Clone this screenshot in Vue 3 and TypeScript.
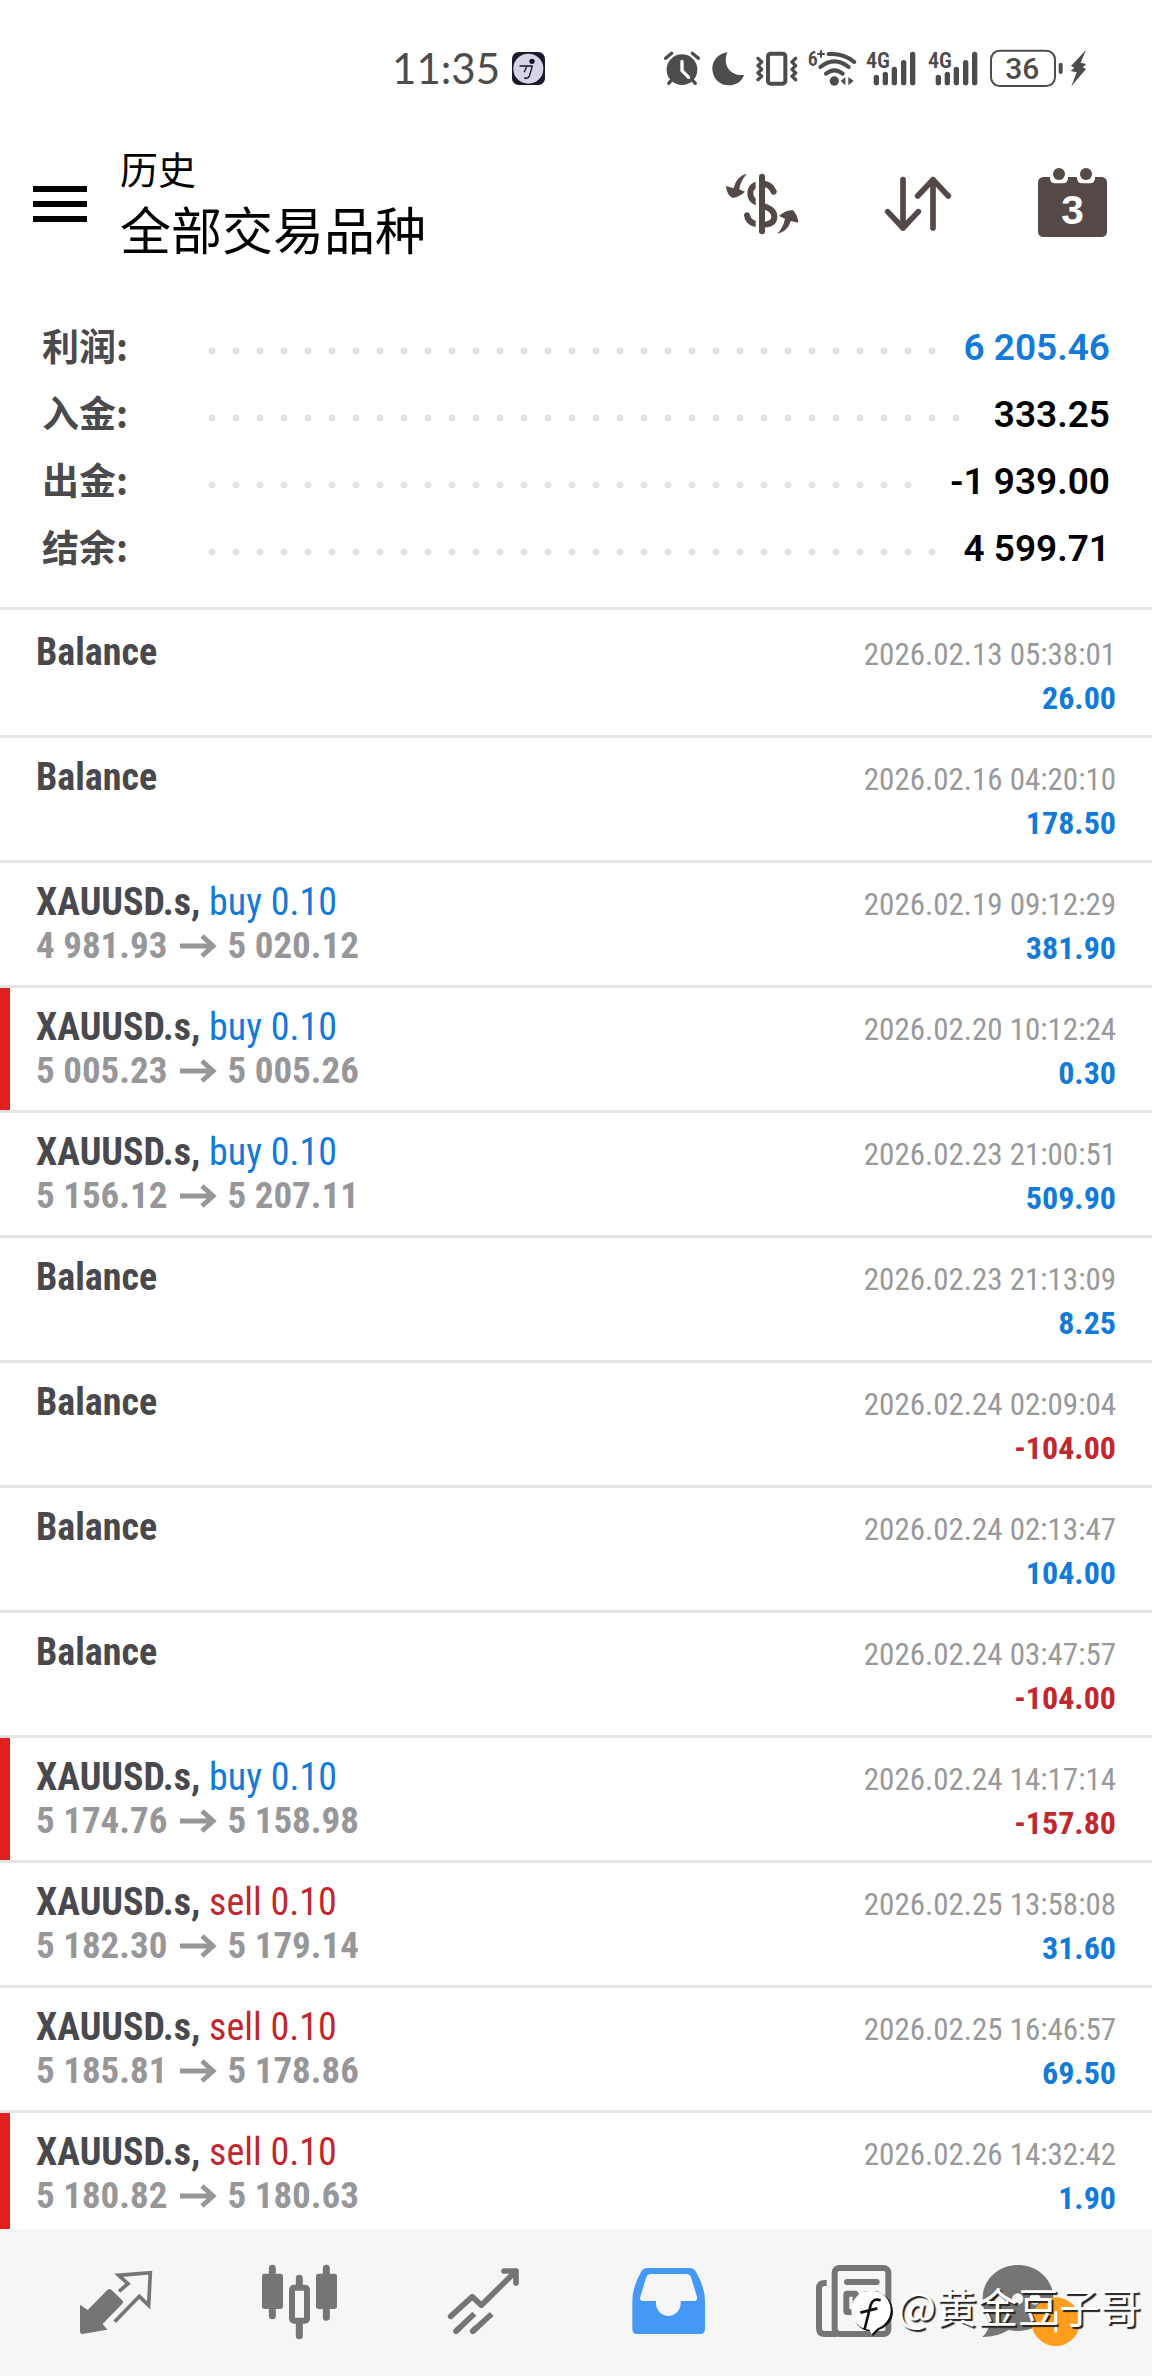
<script setup lang="ts">
interface SummaryLine {
  label: string
  value: string
  positive?: boolean
}

interface HistoryEntry {
  time: string
  amount: string
  side?: 'buy' | 'sell'
  open?: string
  close?: string
  flagged?: boolean
}

const summary: SummaryLine[] = [
  { label: '利润:', value: '6 205.46', positive: true },
  { label: '入金:', value: '333.25' },
  { label: '出金:', value: '-1 939.00' },
  { label: '结余:', value: '4 599.71' },
]

const entries: HistoryEntry[] = [
  { time: '2026.02.13 05:38:01', amount: '26.00' },
  { time: '2026.02.16 04:20:10', amount: '178.50' },
  { time: '2026.02.19 09:12:29', amount: '381.90', side: 'buy', open: '4 981.93', close: '5 020.12' },
  { time: '2026.02.20 10:12:24', amount: '0.30', side: 'buy', open: '5 005.23', close: '5 005.26', flagged: true },
  { time: '2026.02.23 21:00:51', amount: '509.90', side: 'buy', open: '5 156.12', close: '5 207.11' },
  { time: '2026.02.23 21:13:09', amount: '8.25' },
  { time: '2026.02.24 02:09:04', amount: '-104.00' },
  { time: '2026.02.24 02:13:47', amount: '104.00' },
  { time: '2026.02.24 03:47:57', amount: '-104.00' },
  { time: '2026.02.24 14:17:14', amount: '-157.80', side: 'buy', open: '5 174.76', close: '5 158.98', flagged: true },
  { time: '2026.02.25 13:58:08', amount: '31.60', side: 'sell', open: '5 182.30', close: '5 179.14' },
  { time: '2026.02.25 16:46:57', amount: '69.50', side: 'sell', open: '5 185.81', close: '5 178.86' },
  { time: '2026.02.26 14:32:42', amount: '1.90', side: 'sell', open: '5 180.82', close: '5 180.63', flagged: true },
]
</script>

<template>
  <div class="app">
    <div class="status">
      <div class="status-left">
        <span class="clock">11:35</span>
        <svg width="33" height="33" viewBox="397 65 99 99" aria-hidden="true">
          <rect x="397" y="65" width="99" height="99" rx="20" fill="#1d1b2b" />
          <circle cx="446" cy="115" r="45" fill="#d9d3ea" />
          <circle cx="457" cy="93" r="8" fill="#17151f" />
          <path d="M421 107H458L449 138Q446 146 435 143M441 109L434 124" fill="none" stroke="#17151f" stroke-width="4" stroke-linecap="round" stroke-linejoin="round" />
        </svg>
      </div>
      <div class="status-right">
        <svg width="37" height="39" viewBox="72 54 111 117" aria-hidden="true">
          <circle cx="126" cy="116" r="46" fill="#4c4c4c" />
          <path d="M77 82L95 67M157 67L175 82M94 148L86 157M158 148L166 157" class="ink" stroke-width="10" />
          <path d="M126 91V119L146 139" fill="none" stroke="#fff" stroke-width="10" stroke-linecap="round" stroke-linejoin="round" />
        </svg>
        <svg width="34" height="39" viewBox="213 54 102 117" aria-hidden="true">
          <path d="M262 63C228 70 216 95 217 115C219 145 240 163 265 163C290 163 306 150 312 132C272 136 246 104 262 63Z" fill="#4c4c4c" />
        </svg>
        <svg width="43" height="39" viewBox="345 54 129 117" aria-hidden="true">
          <rect x="384" y="68" width="52" height="90" rx="8" class="ink" stroke-width="12" />
          <path d="M354 82L365 93L354 104L365 115L354 126L365 136L354 146M467 82L456 93L467 104L456 115L467 126L456 136L467 146" class="ink" stroke-width="10" />
        </svg>
        <svg width="48" height="39" viewBox="504 54 144 117" aria-hidden="true">
          <text x="503" y="104" class="tag" font-size="60">6</text>
          <path d="M534 69H552M543 60V78" class="ink" stroke-width="6" />
          <path d="M566 69Q612 66 643 93M541 108Q583 74 626 108M558 128Q583 108 608 128" class="ink" stroke-width="12" />
          <circle cx="583" cy="150" r="14" fill="#4c4c4c" />
          <path d="M616 138V163L602 150ZM625 138L641 150L625 163Z" fill="#4c4c4c" />
        </svg>
        <svg v-for="n in 2" :key="n" width="52" height="39" viewBox="678 54 156 117" aria-hidden="true">
          <text x="678" y="110" class="tag" font-size="66">4G</text>
          <path d="M709 139V155M736 130V155M763 115V155M791 95V155M818 70V155" class="ink" stroke-width="16" />
        </svg>
        <svg width="70" height="39" viewBox="1050 54 210 117" aria-hidden="true">
          <rect x="1053" y="59" width="192" height="106" rx="26" class="ink" stroke-width="6" />
          <path d="M1262 101V123" class="ink" stroke-width="12" />
          <text x="1147" y="145" class="charge" font-size="90" text-anchor="middle">36</text>
        </svg>
        <svg width="17" height="39" viewBox="1290 54 51 117" aria-hidden="true">
          <path d="M1338 57L1293 105L1303 110L1292 120L1310 124L1294 166L1338 114L1328 109L1339 99L1322 95Z" fill="#4c4c4c" />
        </svg>
      </div>
    </div>

    <header class="header">
      <button class="menu" type="button" aria-label="菜单">
        <span></span><span></span><span></span>
      </button>
      <h1 class="title">
        <span class="section">历史</span>
        <span class="filter">全部交易品种</span>
      </h1>
      <div class="actions">
        <button type="button" aria-label="货币">
          <svg width="74" height="70" viewBox="135 87 222 210">
            <g fill="none" stroke="#544946" stroke-width="18" stroke-linecap="round">
              <path d="M281 155Q272 131 246 131C222 131 211 144 211 160C211 180 224 186 246 196C272 206 283 214 283 230C283 246 270 254 246 254C218 254 204 244 201 226" />
              <path d="M232 94V290" stroke="#fff" stroke-width="10" stroke-linecap="butt" />
              <path d="M246 110V274" />
            </g>
            <path d="M201 101C180 105 166 122 161 145L138 138Q140 165 158 174Q180 170 195 155L178 148C180 130 190 112 201 101ZM292 281C313 277 327 262 332 243L355 248Q352 222 338 210Q316 210 297 228L315 236C312 252 304 269 292 281Z" fill="#544946" />
          </svg>
        </button>
        <button type="button" aria-label="排序">
          <svg width="67" height="70" viewBox="615 87 201 210">
            <path d="M669 119V264M623 215L669 264L715 215M759 264V119M713 168L759 119L805 168" fill="none" stroke="#544946" stroke-width="17" stroke-linecap="round" stroke-linejoin="round" />
          </svg>
        </button>
        <button type="button" aria-label="日期">
          <svg width="69" height="70" viewBox="1074 87 207 210">
            <rect x="1074" y="111" width="207" height="180" rx="16" fill="#544946" />
            <path d="M1110 108H1164V114Q1164 130 1148 130H1126Q1110 130 1110 114ZM1191 108H1245V114Q1245 130 1229 130H1207Q1191 130 1191 114Z" fill="#fff" />
            <circle cx="1137" cy="102" r="18" fill="#544946" />
            <circle cx="1218" cy="102" r="18" fill="#544946" />
            <text x="1178" y="253" class="day" font-size="122" text-anchor="middle">3</text>
          </svg>
        </button>
      </div>
    </header>

    <dl class="summary">
      <div v-for="line in summary" :key="line.label" class="sum-line">
        <dt>{{ line.label }}</dt>
        <dd :class="{ blue: line.positive }">{{ line.value }}</dd>
      </div>
    </dl>

    <ul class="list">
      <li v-for="entry in entries" :key="entry.time" class="entry" :class="{ flagged: entry.flagged }">
        <div class="deal">
          <template v-if="entry.side">
            <div class="line">
              <b>XAUUSD.s, </b><span :class="entry.side === 'buy' ? 'blue' : 'red'">{{ entry.side }} 0.10</span>
            </div>
            <div class="line prices">
              {{ entry.open }}<svg class="arrow" width="36" height="24" viewBox="0 0 36 24" aria-label="→">
                <path d="M0 12H33M22 2L33 12L22 22" fill="none" stroke="currentColor" stroke-width="5" />
              </svg>{{ entry.close }}
            </div>
          </template>
          <div v-else class="line"><b>Balance</b></div>
        </div>
        <div class="result">
          <div class="line"><time>{{ entry.time }}</time></div>
          <div class="line">
            <span class="amount" :class="entry.amount.startsWith('-') ? 'red' : 'blue'">{{ entry.amount }}</span>
          </div>
        </div>
      </li>
    </ul>

    <nav class="tabs">
      <button type="button" aria-label="行情">
        <svg width="80" height="80" viewBox="228 486 240 240">
          <path d="M240 614L263 630L322 570Q328 564 335 570L366 600Q372 606 366 612L308 672L322 689L247 702Q240 702 240 695Z" fill="#757575" />
          <path d="M357 574L384 551L356 526L451 518L446 616L418 589L344 665" fill="none" stroke="#757575" stroke-width="11" />
        </svg>
      </button>
      <button type="button" aria-label="图表">
        <svg width="80" height="80" viewBox="780 486 240 240" fill="#757575">
          <rect x="786" y="521" width="63" height="106" rx="8" />
          <rect x="948" y="521" width="63" height="106" rx="8" />
          <path d="M817 505V647M979 505V652M898 535V560M898 665V707" stroke="#757575" stroke-width="21" stroke-linecap="round" />
          <rect x="876" y="563" width="45" height="99" rx="6" fill="#f6f6f6" stroke="#757575" stroke-width="18" />
        </svg>
      </button>
      <button type="button" aria-label="交易">
        <svg width="80" height="80" viewBox="132 186 240 240">
          <g fill="none" stroke="#757575" stroke-width="17" stroke-linejoin="round">
            <path d="M152 349L217 290L244 316L348 213M312 213H348V249M168 394L178 384M218 394L228 384" stroke-linecap="round" />
            <path d="M168 394L223 341M218 394L275 342" />
          </g>
        </svg>
      </button>
      <button type="button" aria-label="历史" aria-current="page">
        <svg width="80" height="80" viewBox="684 186 240 240">
          <path fill="#4499f7" fill-rule="evenodd" d="M742 204H868Q880 204 887 214Q915 262 915 303V388Q915 402 901 402H711Q697 402 697 388V303Q697 262 724 214Q731 204 742 204ZM752 222Q743 222 739 232L721 290Q718 303 729 303H768V310A37 38 0 0 0 842 310V303H882Q893 303 891 290L873 232Q869 222 858 222Z" />
        </svg>
      </button>
      <button type="button" aria-label="新闻">
        <svg width="80" height="80" viewBox="96 186 240 240">
          <g fill="none" stroke="#757575" stroke-width="18">
            <rect x="164" y="204" width="161" height="198" rx="14" />
            <path d="M140 249H134Q117 249 117 266V385Q117 402 134 402H170" />
            <path d="M201 246H290M260 282H290M260 310H290" stroke-linecap="round" />
            <rect x="199" y="281" width="28" height="55" rx="2" />
          </g>
        </svg>
      </button>
      <button type="button" aria-label="消息">
        <svg width="80" height="80" viewBox="648 186 240 240">
          <path d="M714 195C774 195 820 240 820 294C820 350 774 393 714 393Q700 393 686 390Q655 410 607 411Q627 392 628 368Q608 335 608 294C608 240 654 195 714 195Z" fill="#757575" />
          <path d="M661 297H661M713 297H713M765 297H765" stroke="#f6f6f6" stroke-width="34" stroke-linecap="round" />
          <circle cx="827" cy="365" r="73" fill="#ff9d1c" />
          <path d="M827 337V393" stroke="#fff" stroke-width="9" stroke-linecap="round" />
        </svg>
      </button>
    </nav>

    <div class="watermark">
      <svg width="44" height="48" viewBox="220 270 132 144" aria-hidden="true">
        <path d="M289 279C322 279 349 304 349 338C349 368 326 386 308 392L289 411L281 397C250 394 229 370 229 338C229 304 256 279 289 279Z" fill="#111" />
        <path d="M284 275C317 275 342 300 342 333C342 362 320 382 303 388L285 406L278 392C247 389 224 366 224 333C224 300 250 275 284 275Z" fill="#fff" />
        <path d="M312 304Q289 296 282 318L264 390M251 341L302 328" fill="none" stroke="#111" stroke-width="8" />
      </svg>
      <span>@黄金豆子哥</span>
    </div>
  </div>
</template>

<style>
body {
  margin: 0;
  background: #fff;
}
</style>

<style scoped>
.app {
  position: relative;
  display: flex;
  flex-direction: column;
  height: 100vh;
  overflow: hidden;
  background: #fff;
  color: #000;
  font-family: Roboto, "Noto Sans CJK SC", sans-serif;
}

svg {
  display: block;
  flex: none;
  overflow: visible;
}

button {
  padding: 0;
  border: 0;
  background: none;
  color: inherit;
  font: inherit;
  cursor: pointer;
}

.blue {
  color: #127ad8;
}

.red {
  color: #c1272d;
}

/* Status bar */
.status {
  display: flex;
  flex: none;
  align-items: center;
  justify-content: flex-end;
  gap: 119px;
  height: 136px;
  padding-right: 65px;
}

.status-left {
  display: flex;
  align-items: center;
  gap: 12px;
}

.clock {
  color: #4c4c4c;
  font-family: Lato, sans-serif;
  font-size: 42px;
  line-height: 48px;
}

.status-right {
  display: flex;
  gap: 10px;
}

.ink {
  fill: none;
  stroke: #4c4c4c;
  stroke-linecap: round;
  stroke-linejoin: round;
}

.tag {
  fill: #4c4c4c;
  font-family: "Roboto Condensed", Roboto, sans-serif;
  font-weight: 600;
}

.charge {
  fill: #4c4c4c;
  font-family: Roboto, sans-serif;
  font-weight: 500;
}

/* Header */
.header {
  display: flex;
  flex: none;
  align-items: center;
  height: 136px;
  padding: 0 45px 0 33px;
}

.menu {
  display: flex;
  flex-direction: column;
  gap: 9px;
  width: 54px;
  margin-right: 33px;
}

.menu span {
  height: 6px;
  background: #000;
}

.title {
  display: flex;
  flex: 1;
  flex-direction: column;
  margin: 0;
  padding-bottom: 12px;
  font-family: "Noto Sans CJK SC", sans-serif;
  font-weight: 400;
  line-height: 60px;
}

.section {
  font-size: 38px;
}

.filter {
  font-size: 51px;
}

.actions {
  display: flex;
  gap: 86px;
}

.day {
  fill: #fff;
  font-family: "Liberation Sans", sans-serif;
  font-weight: 700;
}

/* Totals */
.summary {
  flex: none;
  margin: 0;
  padding: 42px 42px 25px;
  border-bottom: 3px solid #e4e4e4;
}

.sum-line {
  display: flex;
  align-items: center;
  height: 67px;
}

.sum-line dt {
  width: 166px;
  padding-bottom: 6px;
  color: #4a4a4d;
  font-family: "Noto Sans CJK SC", sans-serif;
  font-size: 37px;
  font-weight: 700;
  line-height: 60px;
}

.sum-line dd {
  display: flex;
  flex: 1;
  align-items: center;
  margin: 0;
  font-size: 37px;
  font-weight: 600;
}

/* Dotted leader between the label and its value */
.sum-line dd::before {
  flex: 1;
  height: 8px;
  margin: 7px 26px 0 0;
  background: radial-gradient(circle at 4px 4px, #e2e2e2 3px, transparent 4px) 0 0 / 24px 8px;
  content: "";
}

/* History */
.list {
  flex: 1;
  min-height: 0;
  margin: 0;
  padding: 3px 0 0;
  overflow-y: auto;
  scrollbar-width: none;
  list-style: none;
  font-family: "Roboto Condensed", Roboto, sans-serif;
}

.entry {
  display: flex;
  justify-content: space-between;
  padding: 17px 36px;
  border-bottom: 3px solid #e4e4e4;
}

.flagged {
  box-shadow: inset 10px 0 0 #e0201f;
}

.line {
  height: 44px;
  font-size: 38px;
  line-height: 44px;
  white-space: pre;
}

.line b {
  color: #49494d;
  font-weight: 700;
}

.prices {
  display: flex;
  align-items: center;
  color: #97979a;
  font-size: 37px;
  font-weight: 700;
}

.arrow {
  margin: 0 11px 0 13px;
}

.result {
  text-align: right;
}

.line time {
  color: #98999b;
  font-size: 31px;
  line-height: 1;
}

.amount {
  font-size: 32px;
  font-weight: 700;
  line-height: 1;
}

/* Bottom tabs */
.tabs {
  display: grid;
  flex: none;
  grid-template-columns: repeat(6, 1fr);
  justify-items: center;
  padding: 33px 24px 34px;
  background: #f6f6f6;
}

.watermark {
  position: absolute;
  right: 11px;
  bottom: 31px;
  display: flex;
  align-items: center;
  gap: 3px;
  color: #fff;
  font-family: "Noto Sans CJK SC", sans-serif;
  font-size: 41px;
  line-height: 48px;
  text-shadow: 2px 2px 1px #222;
  pointer-events: none;
}

.watermark span {
  padding-bottom: 16px;
}
</style>
